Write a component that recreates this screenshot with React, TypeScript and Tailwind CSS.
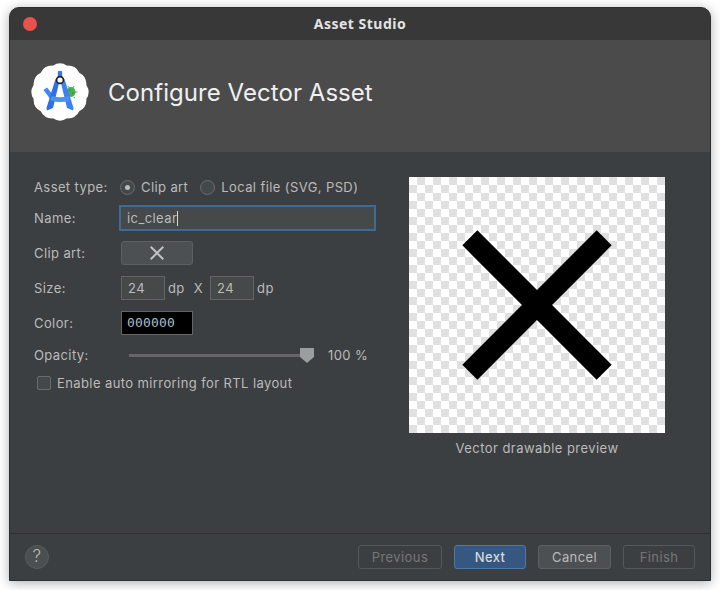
const scallop = Array.from({ length: 24 }, (_, i) => {
  const a = (i / 24) * Math.PI * 2;
  const r = i % 2 === 0 ? 31 : 27.3;
  const x = (30 + Math.cos(a) * r).toFixed(2);
  const y = (30 + Math.sin(a) * r).toFixed(2);
  return `${x},${y}`;
});

function scallopPath() {
  let d = `M${scallop[1]}`;
  for (let i = 1; i < 24; i += 2) {
    d += ` Q${scallop[(i + 1) % 24]} ${scallop[(i + 2) % 24]}`;
  }
  return d + "Z";
}

function Logo() {
  return (
    <svg width="60" height="60" viewBox="0 0 60 60">
      <path d={scallopPath()} fill="#ffffff" />
      {/* little android behind the compass */}
      <ellipse cx="41" cy="30" rx="4.5" ry="5" fill="#4caf50" />
      <path d="M38 24l1.5 2.5M44 24l-1.5 2.5M45 30h2.5M43.5 35l1.5 1" stroke="#4caf50" strokeWidth="1" />
      <circle cx="40" cy="28" r="0.6" fill="#1b5e20" />
      <circle cx="43" cy="31" r="0.6" fill="#1b5e20" />
      {/* compass */}
      <path d="M13.5 28l3.5-2.5 7 8.5 -1.5 6 -9-12z" fill="#4285f4" />
      <path d="M27.8 9.5q2.2-1.5 4.4 0V16h-4.4z" fill="#3b78e7" />
      <path d="M25.5 17h4.5l-7 29 -6 2.5 -0.5-2.5z" fill="#2f6fe4" />
      <path d="M34.5 17h-4.5l7 29 6 2.5 0.5-2.5z" fill="#3b82f0" />
      <path d="M21.5 34q8.5 2.5 17 0l1.2 4.5q-9.7 3-19.4 0z" fill="#4a90f5" />
      <circle cx="30" cy="18" r="3.4" fill="#ffffff" stroke="#1f1f1f" strokeWidth="1.6" />
    </svg>
  );
}

function FieldRow({ label, top, children }: { label: string; top: string; children: React.ReactNode }) {
  return (
    <div className={`flex items-center ${top}`}>
      <span className="w-[87px] shrink-0 pt-px">{label}</span>
      {children}
    </div>
  );
}

function SmallInput({ value }: { value: string }) {
  return (
    <div className="flex h-6 w-11 items-center border border-[#646464] bg-[#45494a] pl-[6px] pt-px">{value}</div>
  );
}

function FooterButton({ label, kind, width }: { label: string; kind: "off" | "main" | "on"; width: string }) {
  const look =
    kind === "main"
      ? "border-[#4c7aa8] bg-[#365880] font-medium text-[#d4d8dc]"
      : kind === "on"
        ? "border-[#5e6060] bg-[#4c5052] text-[#bbbbbb]"
        : "border-[#55585a] text-[#777777]";
  return (
    <div className={`flex h-6 items-center justify-center rounded-[3px] border pt-px ${width} ${look}`}>{label}</div>
  );
}

export default function App() {
  return (
    <div className="h-[590px] w-[720px] overflow-hidden bg-white pl-[9px] pt-[7px] font-['Inter',sans-serif] text-[13px] tracking-[0.4px] text-[#bbbbbb]">
      <div className="flex h-[574px] w-[702px] flex-col overflow-hidden rounded-t-[10px] border border-[#2e2e2e] bg-[#3c3f41] shadow-[0_2px_12px_rgba(0,0,0,0.32)]">
        <div className="flex h-8 shrink-0 items-center bg-[#383838] pl-[13px]">
          <span className="h-[14px] w-[14px] rounded-full bg-[#e9524a]" />
          <span className="flex-1 pb-px pr-[27px] text-center font-['Noto_Sans',sans-serif] text-[14px] font-bold tracking-[0.5px] text-[#e4e4e4]">
            Asset Studio
          </span>
        </div>

        <div className="flex h-[112px] shrink-0 items-center bg-[#4b4b4b] pb-2 pl-5">
          <Logo />
          <h1 className="ml-[18px] pt-[2px] text-[24px] font-normal tracking-[0.05px] text-[#f0f0f0]">Configure Vector Asset</h1>
        </div>

        <div className="flex flex-1 pl-6 pt-[25px]">
          <div className="w-[375px] shrink-0">
            <div className="flex h-5 items-center">
              <span className="w-[86px] shrink-0 pt-px">Asset type:</span>
              <span className="flex h-[15px] w-[15px] items-center justify-center rounded-full border border-[#6b6b6b] bg-[#43494a]">
                <span className="h-[5px] w-[5px] rounded-full bg-[#bbbbbb]" />
              </span>
              <span className="ml-[6px] pt-px">Clip art</span>
              <span className="ml-[12px] h-[15px] w-[15px] rounded-full border border-[#6b6b6b] bg-[#43494a]" />
              <span className="ml-[6px] pt-px">Local file (SVG, PSD)</span>
            </div>
            <FieldRow label="Name:" top="mt-[9px] h-6">
              <div className="-ml-[2px] flex h-[26px] w-[257px] items-center border-2 border-[#3f6a94] bg-[#45494a] pl-[6px] pt-px">
                ic_clear
                <span className="h-[15px] w-px bg-[#d8d8d8]" />
              </div>
            </FieldRow>
            <FieldRow label="Clip art:" top="mt-[11px] h-6">
              <div className="flex h-6 w-[72px] items-center justify-center rounded-[3px] border border-[#5e6060] bg-[#4c5052]">
                <svg width="24" height="24" viewBox="0 0 24 24">
                  <path d="M19 6.41 17.59 5 12 10.59 6.41 5 5 6.41 10.59 12 5 17.59 6.41 19 12 13.41 17.59 19 19 17.59 13.41 12z" fill="#bfc1c2" />
                </svg>
              </div>
            </FieldRow>
            <FieldRow label="Size:" top="mt-[11px] h-6">
              <SmallInput value="24" />
              <span className="ml-[3px] pt-px">dp</span>
              <span className="ml-[9px] pt-px">X</span>
              <span className="ml-[7px]"><SmallInput value="24" /></span>
              <span className="ml-[3px] pt-px">dp</span>
            </FieldRow>
            <FieldRow label="Color:" top="mt-[11px] h-6">
              <div className="flex h-6 w-[72px] items-center border border-[#646464] bg-black pl-[5px] font-['DejaVu_Sans_Mono',monospace] text-[13px] tracking-[0.15px] text-[#a0c0d8]">
                000000
              </div>
            </FieldRow>
            <div className="mt-[9px] flex h-[24px] items-center">
              <span className="w-[95px] shrink-0">Opacity:</span>
              <div className="mb-[2px] h-[3px] w-[172px] bg-[#646668]" />
              <svg width="14" height="17" viewBox="0 0 14 17" className="-ml-px mb-[2px]">
                <path d="M0 1h14v9l-7 6-7-6z" fill="#9b9e9e" />
              </svg>
              <span className="ml-[14px]">100 %</span>
            </div>
            <label className="mt-[3px] flex h-6 items-center pl-[3px]">
              <span className="h-[14px] w-[14px] rounded-[2px] border border-[#6b6b6b] bg-[#43494a]" />
              <span className="ml-[6px] pt-px">Enable auto mirroring for RTL layout</span>
            </label>
          </div>

          <div className="flex flex-col items-center">
            <div className="h-64 w-64 bg-[conic-gradient(#e0e0e0_25%,#ffffff_0_50%,#e0e0e0_0_75%,#ffffff_0)] bg-[length:16px_16px]">
              <svg width="256" height="256" viewBox="0 0 24 24">
                <path d="M19 6.41 17.59 5 12 10.59 6.41 5 5 6.41 10.59 12 5 17.59 6.41 19 12 13.41 17.59 19 19 17.59 13.41 12z" fill="#000000" />
              </svg>
            </div>
            <span className="mt-[6px] tracking-[0.45px]">Vector drawable preview</span>
          </div>
        </div>

        <div className="flex h-[47px] shrink-0 items-center border-t border-[#323232] pl-[15px]">
          <span className="flex h-6 w-6 items-center justify-center rounded-full border border-[#5a5d5f] bg-[#4b4f51] text-[17px] font-light">?</span>
          <div className="ml-[309px] flex">
            <FooterButton label="Previous" kind="off" width="w-[84px]" />
            <div className="ml-[12px]"><FooterButton label="Next" kind="main" width="w-[72px]" /></div>
            <div className="ml-[12px]"><FooterButton label="Cancel" kind="on" width="w-[73px]" /></div>
            <div className="ml-[12px]"><FooterButton label="Finish" kind="off" width="w-[72px]" /></div>
          </div>
        </div>
      </div>
    </div>
  );
}
